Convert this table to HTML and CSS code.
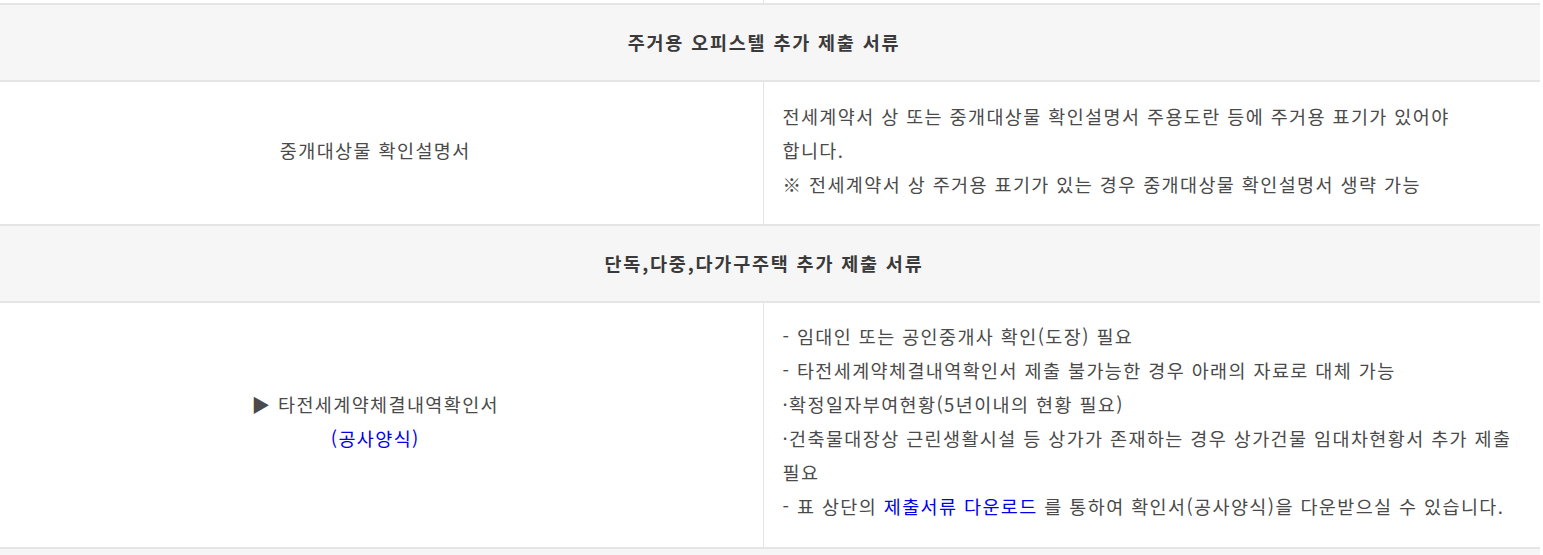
FILE: index.html
```html
<!DOCTYPE html>
<html lang="ko">
<head>
<meta charset="utf-8">
<title>추가 제출 서류</title>
<link rel="stylesheet" href="styles.css">
</head>
<body>
<div class="wrap">
<table class="docs">
  <colgroup>
    <col class="col-left">
    <col class="col-right">
  </colgroup>
  <tbody>
    <tr class="row-prev">
      <td class="cell cell-left"></td>
      <td class="cell cell-right"></td>
    </tr>
    <tr class="row-head">
      <th colspan="2" class="head">주거용 오피스텔 추가 제출 서류</th>
    </tr>
    <tr>
      <td class="cell cell-left pad-a">중개대상물 확인설명서</td>
      <td class="cell cell-right pad-a">전세계약서 상 또는 중개대상물 확인설명서 주용도란 등에 주거용 표기가 있어야 합니다.<br>※ 전세계약서 상 주거용 표기가 있는 경우 중개대상물 확인설명서 생략 가능</td>
    </tr>
    <tr class="row-head">
      <th colspan="2" class="head">단독,다중,다가구주택 추가 제출 서류</th>
    </tr>
    <tr>
      <td class="cell cell-left pad-b">▶ 타전세계약체결내역확인서<br><a class="link" href="#">(공사양식)</a></td>
      <td class="cell cell-right pad-b">- 임대인 또는 공인중개사 확인(도장) 필요<br>- 타전세계약체결내역확인서 제출 불가능한 경우 아래의 자료로 대체 가능<br>·확정일자부여현황(5년이내의 현황 필요)<br>·건축물대장상 근린생활시설 등 상가가 존재하는 경우 상가건물 임대차현황서 추가 제출 필요<br>- 표 상단의 <a class="link" href="#">제출서류 다운로드</a> 를 통하여 확인서(공사양식)을 다운받으실 수 있습니다.</td>
    </tr>
    <tr class="row-head">
      <th colspan="2" class="head">&nbsp;</th>
    </tr>
  </tbody>
</table>
</div>
</body>
</html>
```

FILE: styles.css
```css
html, body {
  margin: 0;
  padding: 0;
  background: #ffffff;
}

.wrap {
  width: 1540px;
  height: 555px;
  overflow: hidden;
}

.docs {
  margin-left: -12px;
  width: 1552px;
  table-layout: fixed;
  border-collapse: collapse;
  font-family: "Noto Sans CJK KR", "Noto Sans", sans-serif;
  font-size: 18.5px;
  letter-spacing: 1.4px;
  line-height: 34px;
  color: #4a4a4a;
  word-break: keep-all;
}

.col-left { width: 775px; }
.col-right { width: 777px; }

.docs tr {
  border-top: 2px solid #e5e5e5;
}

.docs .row-prev {
  border-top: 0;
}

.row-prev .cell {
  height: 3px;
  padding: 0;
  line-height: 0;
}

.head {
  background: #f6f6f6;
  font-weight: bold;
  color: #3a3a3a;
  text-align: center;
  padding: 20px 0 21px;
  letter-spacing: 1.8px;
}

.cell {
  vertical-align: middle;
}

.cell-left {
  text-align: center;
  border-right: 1px solid #e5e5e5;
}

.cell-right {
  text-align: left;
  padding-left: 19px;
  padding-right: 26px;
}

.pad-a {
  padding-top: 17px;
  padding-bottom: 23px;
}

.pad-b {
  padding-top: 16px;
  padding-bottom: 24px;
}

.link {
  color: #0000ee;
  text-decoration: none;
}
```
